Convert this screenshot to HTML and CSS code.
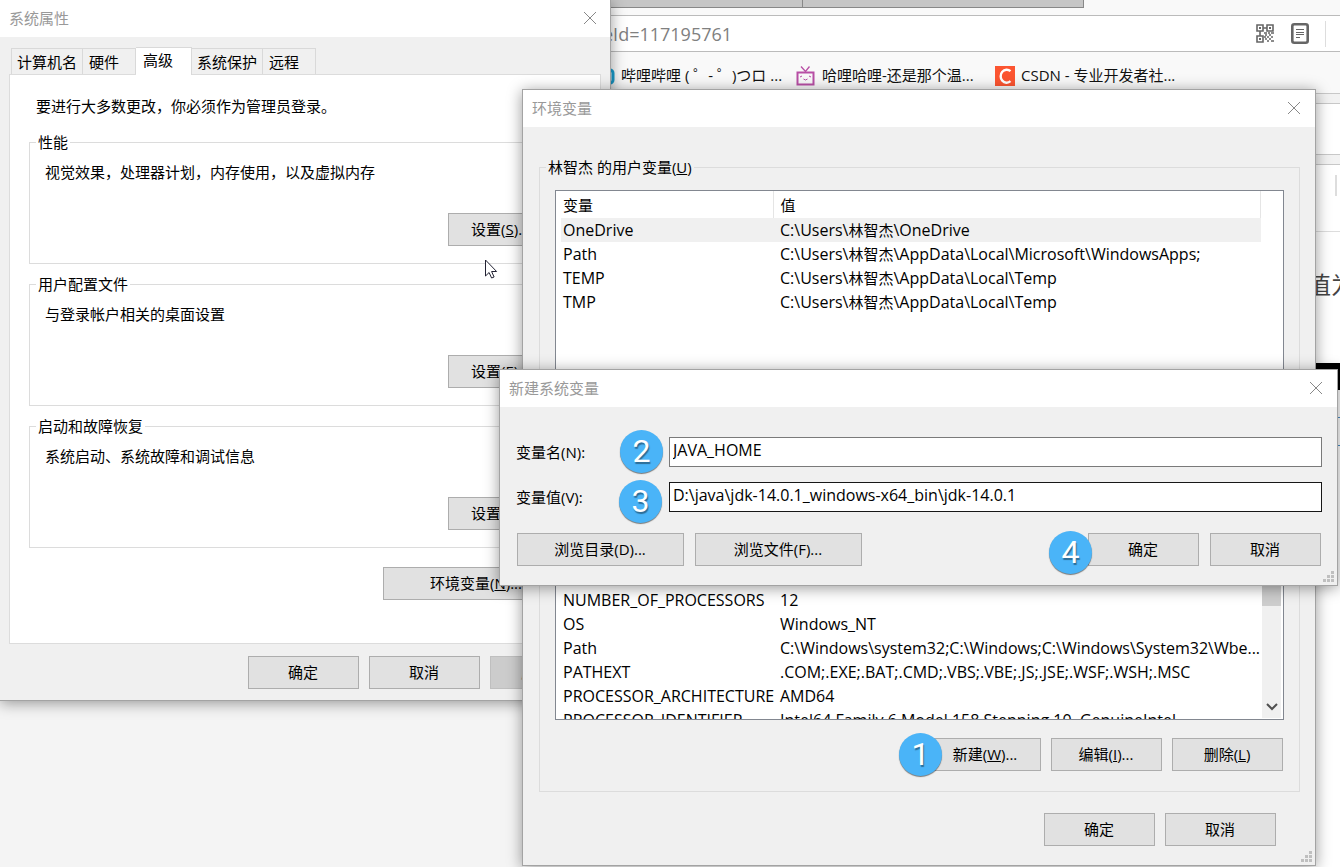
FILE: index.html
```
<!DOCTYPE html>
<html lang="zh-CN">
<head>
<meta charset="utf-8">
<title>环境变量</title>
<link rel="stylesheet" href="styles.css">
</head>
<body>
<div class="desktop">

  <main class="browser">
    <div class="browser-tabs"><span class="browser-tab"></span><span class="browser-tab"></span></div>
    <div class="address">
      <span class="address-text">eId=117195761</span>
      <svg class="qr" width="18" height="19" viewBox="0 0 18 19" fill="none" stroke="#666">
        <path d="M1 1h6v6h-6zM11 1h6v6h-6zM1 12h6v6h-6z" stroke-width="1.600"/>
        <path d="M3 4h2M13 4h2M3 15h2" stroke-width="2"/>
        <path d="M7 4h4M4 7v5M8 9h3M12 9h2M15 9h3M9 11h2M13 11h2M8 13h2M11 13h2M15 13h2M9 15h2M13 15h2M11 17h2M15 17h3" stroke-width="1.600"/>
      </svg>
      <svg class="reader" width="18" height="22" viewBox="0 0 18 22" fill="none" stroke="#666">
        <rect x="1.300" y="1.300" width="15.400" height="18.400" rx="2" stroke-width="2.600"/>
        <path d="M5 6.500h8M5 9.500h8M5 11.500h8M5 14.500h4" stroke-width="1"/>
      </svg>
      <span class="address-rule"></span>
    </div>
    <nav class="bookmarks">
      <a class="bookmark" href="#">
        <svg width="18" height="20" viewBox="0 0 18 20" fill="none" stroke="#1a9fd0" stroke-width="3"><rect x="2" y="4" width="14" height="13" rx="3"/></svg>
        <span>哔哩哔哩 ( ゜- ゜)つロ ...</span>
      </a>
      <a class="bookmark" href="#">
        <svg width="20" height="20" viewBox="0 0 20 20" fill="none" stroke="#b84fa5"><path d="M1.500 6.500h16v12h-16z" stroke-width="2"/><path d="M5 0.500l4.500 5 4-5" stroke-width="1.300"/><path d="M4 11l2-1M13 10l2 1M7.500 13l2 1 2-1" stroke-width="1"/></svg>
        <span>哈哩哈哩-还是那个温...</span>
      </a>
      <a class="bookmark" href="#">
        <svg width="20" height="20" viewBox="0 0 20 20"><path d="M0 0h20v20H0z" fill="#fc5531"/><path d="M15.500 5.200A6 6.500 0 1 0 15.500 15.200" fill="none" stroke="#fff" stroke-width="2.400"/></svg>
        <span>CSDN - 专业开发者社...</span>
      </a>
    </nav>
    <div class="strip"></div>
    <div class="page-bar"></div>
    <div class="strip"></div>
    <div class="page-head"><span class="page-mark"></span></div>
    <div class="page-text">值为</div>
    <div class="code-head"></div>
    <div class="code-row"></div>
    <div class="code-row"></div>
    <div class="page-rest"></div>
  </main>

  <section class="window props">
    <header class="titlebar"><h1>系统属性</h1>
      <button class="close" aria-label="关闭"><svg width="12" height="12" viewBox="0 0 12 12"><path d="M0 0L12 12M12 0L0 12"/></svg></button>
    </header>
    <div class="props-body">
      <div class="tabs" role="tablist">
        <button class="tab" role="tab">计算机名</button>
        <button class="tab wide" role="tab">硬件</button>
        <button class="tab active" role="tab" aria-selected="true">高级</button>
        <button class="tab" role="tab">系统保护</button>
        <button class="tab wide" role="tab">远程</button>
      </div>
      <div class="panel">
        <p class="notice">要进行大多数更改，你必须作为管理员登录。</p>
        <fieldset class="group setting"><legend>性能</legend><p>视觉效果，处理器计划，内存使用，以及虚拟内存</p><button class="btn">设置(<u>S</u>)...</button></fieldset>
        <fieldset class="group setting"><legend>用户配置文件</legend><p>与登录帐户相关的桌面设置</p><button class="btn">设置(<u>E</u>)...</button></fieldset>
        <fieldset class="group setting"><legend>启动和故障恢复</legend><p>系统启动、系统故障和调试信息</p><button class="btn">设置(<u>T</u>)...</button></fieldset>
        <button class="btn env-btn">环境变量(<u>N</u>)...</button>
      </div>
      <div class="actions"><button class="btn">确定</button><button class="btn">取消</button><button class="btn" disabled>应用(<u>A</u>)</button></div>
    </div>
    <svg class="cursor" width="13" height="20" viewBox="0 0 13 20"><path d="M.5 1v16l3.600-3.500 2.500 5.500 2.500-1-2.500-5.500h5z" fill="#fff" stroke="#223"/></svg>
  </section>

  <section class="window env">
    <header class="titlebar"><h1>环境变量</h1>
      <button class="close" aria-label="关闭"><svg width="12" height="12" viewBox="0 0 12 12"><path d="M0 0L12 12M12 0L0 12"/></svg></button>
    </header>
    <div class="env-body">
      <fieldset class="group user-vars"><legend>林智杰 的用户变量(<u>U</u>)</legend>
        <div class="list">
          <table class="vars">
            <thead><tr><th>变量</th><th>值</th></tr></thead>
            <tbody>
              <tr class="selected"><td>OneDrive</td><td>C:\Users\<span class="han">林智杰</span>\OneDrive</td></tr>
              <tr><td>Path</td><td>C:\Users\<span class="han">林智杰</span>\AppData\Local\Microsoft\WindowsApps;</td></tr>
              <tr><td>TEMP</td><td>C:\Users\<span class="han">林智杰</span>\AppData\Local\Temp</td></tr>
              <tr><td>TMP</td><td>C:\Users\<span class="han">林智杰</span>\AppData\Local\Temp</td></tr>
            </tbody>
          </table>
        </div>
      </fieldset>
      <fieldset class="group system-vars">
        <div class="list">
          <table class="vars">
            <tbody>
              <tr><td>NUMBER_OF_PROCESSORS</td><td>12</td></tr>
              <tr><td>OS</td><td>Windows_NT</td></tr>
              <tr><td>Path</td><td>C:\Windows\system32;C:\Windows;C:\Windows\System32\Wbe...</td></tr>
              <tr><td>PATHEXT</td><td>.COM;.EXE;.BAT;.CMD;.VBS;.VBE;.JS;.JSE;.WSF;.WSH;.MSC</td></tr>
              <tr><td>PROCESSOR_ARCHITECTURE</td><td>AMD64</td></tr>
              <tr><td>PROCESSOR_IDENTIFIER</td><td>Intel64 Family 6 Model 158 Stepping 10, GenuineIntel</td></tr>
            </tbody>
          </table>
          <div class="scrollbar"><span class="thumb"></span><svg width="12" height="8" viewBox="0 0 12 8" fill="none" stroke="#505050" stroke-width="2"><path d="M1 1l5 5 5-5"/></svg></div>
        </div>
        <div class="actions"><span class="anchor"><button class="btn">新建(<u>W</u>)...</button><span class="badge">1</span></span><button class="btn">编辑(<u>I</u>)...</button><button class="btn">删除(<u>L</u>)</button></div>
      </fieldset>
      <div class="actions confirm"><button class="btn">确定</button><button class="btn">取消</button></div>
    </div>
    <svg class="grip" width="12" height="12" viewBox="0 0 12 12"><path d="M8 0h3v3H8zM8 4h3v3H8zM8 8h3v3H8zM4 4h3v3H4zM4 8h3v3H4zM0 8h3v3H0z"/></svg>
  </section>

  <section class="window newvar">
    <header class="titlebar"><h1>新建系统变量</h1>
      <button class="close" aria-label="关闭"><svg width="12" height="12" viewBox="0 0 12 12"><path d="M0 0L12 12M12 0L0 12"/></svg></button>
    </header>
    <form class="newvar-body">
      <div class="field"><label for="name">变量名(N):</label><span class="anchor"><input id="name" value="JAVA_HOME"><span class="badge">2</span></span></div>
      <div class="field"><label for="value">变量值(V):</label><span class="anchor"><input id="value" class="focused" value="D:\java\jdk-14.0.1_windows-x64_bin\jdk-14.0.1"><span class="badge low">3</span></span></div>
      <div class="actions">
        <button type="button" class="btn browse">浏览目录(D)...</button><button type="button" class="btn browse">浏览文件(F)...</button>
        <span class="anchor push"><button type="button" class="btn">确定</button><span class="badge ok">4</span></span><button type="button" class="btn">取消</button>
      </div>
    </form>
    <svg class="grip" width="12" height="12" viewBox="0 0 12 12"><path d="M8 0h3v3H8zM8 4h3v3H8zM8 8h3v3H8zM4 4h3v3H4zM4 8h3v3H4zM0 8h3v3H0z"/></svg>
  </section>
</div>
</body>
</html>
```

FILE: styles.css
```
* { box-sizing: border-box; }

body {
  margin: 0;
  font: 15px/20px "Open Sans", "Noto Sans CJK SC", sans-serif;
  color: #000;
  background: #f4f4f4;
}

h1, p { margin: 0; font-size: inherit; font-weight: 400; }
button, input { font: inherit; color: inherit; }

.desktop { position: relative; height: 100vh; overflow: hidden; }

/* Browser behind the dialogs */
.browser {
  display: flex;
  flex-direction: column;
  height: 100%;
  margin-left: 523px;
  background: #f9f9f9;
}
.browser-tabs { display: flex; height: 15px; }
.browser-tab {
  width: 281px;
  height: 8px;
  background: #c6c6c6;
  border: solid #888;
  border-width: 0 1px 1px 0;
}
.browser-tab:first-child { width: 280px; }
.address {
  display: flex;
  align-items: center;
  height: 37px;
  padding-left: 80px;
  background: #fff;
  border: solid #bbb;
  border-width: 1px 0;
}
.address-text { flex: 1; font-size: 18px; color: #808080; }
.qr { margin-right: 17px; }
.reader { margin-right: 16px; }
.address-rule { width: 1px; height: 26px; margin-right: 14px; background: #ddd; }
.bookmarks {
  display: grid;
  grid-template-columns: 199px 199px 1fr;
  align-items: center;
  height: 41px;
  padding: 6px 0 0 74px;
}
.bookmark {
  display: flex;
  gap: 6px;
  align-items: center;
  color: #111;
  text-decoration: none;
  white-space: nowrap;
}
.bookmark span { padding-bottom: 2px; }
.strip { height: 11px; background: #f2f2f2; border: solid #c8c8c8; border-width: 1px 0; }
.page-bar { height: 50px; background: #fff; }
.page-head {
  display: flex;
  justify-content: flex-end;
  height: 67px;
  padding: 10px 3px;
  background: #fff;
  border-bottom: 1px solid #ddd;
}
.page-mark { width: 2px; height: 21px; background: #ddd; }
.page-text {
  height: 131px;
  padding: 36px 0 0 784px;
  overflow: hidden;
  font-size: 24px;
  line-height: 34px;
  color: #444;
  white-space: nowrap;
  background: #fff;
}
.code-head { height: 27px; background: #000; }
.code-row { height: 28px; background: #fff; border-bottom: 1px solid #4a90c8; }
.page-rest { flex: 1; background: #fff; }

/* Dialog windows */
.window {
  position: absolute;
  display: flex;
  flex-direction: column;
  background: #f0f0f0;
  border: 1px solid #a3a3a3;
  box-shadow: 0 2px 14px rgba(0, 0, 0, .4);
}
.props { top: 0; left: 0; width: 611px; height: 701px; border-width: 0 1px 1px 0; }
.env { top: 89px; left: 522px; width: 794px; height: 777px; }
.newvar { top: 369px; left: 499px; width: 839px; height: 217px; }

.titlebar {
  display: flex;
  align-items: center;
  justify-content: space-between;
  height: 37px;
  padding: 0 9px 2px;
  color: #999;
  background: #fff;
}
.props .titlebar { padding-right: 8px; }
.close { display: flex; padding: 6px; background: none; border: 0; }
.close svg { fill: none; stroke: #888; }

.btn {
  width: 111px;
  height: 33px;
  padding: 0 1px 2px 0;
  background: #e1e1e1;
  border: 1px solid #adadad;
  white-space: nowrap;
}
.btn:disabled { color: #838383; background: #ccc; border-color: #bfbfbf; }
.actions { display: flex; gap: 10px; justify-content: flex-end; }

.group { min-width: 0; margin: 0; padding: 0; border: 1px solid #dcdcdc; }
.group legend { padding: 0 2px; margin-left: -9px; }

/* System properties */
.props-body { display: flex; flex-direction: column; flex: 1; padding: 10px 9px 11px; }
.tabs { display: flex; align-items: flex-end; height: 27px; padding-left: 2px; }
.tab {
  height: 26px;
  padding: 0 5px;
  background: #f0f0f0;
  border: 1px solid #d9d9d9;
  border-bottom: 0;
  border-left-width: 0;
}
.tab:first-child { border-left-width: 1px; }
.tab.wide { padding: 0 16px 0 6px; }
.tab.active {
  z-index: 1;
  height: 28px;
  margin-bottom: -1px;
  padding: 0 18px 4px 7px;
  background: #fff;
}
.panel {
  display: flex;
  flex-direction: column;
  height: 570px;
  padding: 21px 19px 0;
  background: #fff;
  border: 1px solid #dcdcdc;
}
.notice { padding-left: 7px; margin-bottom: 16px; }
.setting {
  display: flex;
  flex-direction: column;
  height: 132px;
  margin-bottom: 10px;
  padding: 10px 21px 0 15px;
}
.setting .btn { align-self: flex-end; margin-top: 31px; padding-right: 6px; }
.env-btn { align-self: flex-end; width: 187px; margin: 9px 11px 0 0; }
.props-body > .actions { margin-top: 12px; }
.cursor { position: absolute; top: 259px; left: 485px; }

/* Environment variables */
.env-body { display: flex; flex-direction: column; flex: 1; padding: 30px 15px 19px 16px; }
.list { display: flex; background: #fff; border: 1px solid #828790; overflow: hidden; }
.user-vars { height: 289px; padding: 13px 15px 0; }
.user-vars .list { height: 192px; padding: 0 22px 0 5px; }
.system-vars { height: 345px; margin-top: auto; padding: 79px 15px 0; }
.system-vars .list { height: 193px; padding: 60px 2px 1px 5px; }
.system-vars .actions { margin: 18px 1px 0 0; }
.confirm { margin: 21px 24px 0 0; }
.vars { flex: 1; align-self: flex-start; border-collapse: collapse; table-layout: fixed; width: 100%; }
.vars th, .vars td { height: 24px; padding: 0 2px; text-align: left; font-weight: 400; white-space: nowrap; }
.vars td { font-size: 16px; }
.han { font-size: 15px; }
.vars th { height: 27px; border-right: 1px solid #e5e5e5; }
.vars th:first-child, .vars td:first-child { width: 212px; }
.vars th + th, .vars td + td { padding: 0 0 0 7px; }
.selected { background: #f0f0f0; }
.scrollbar {
  display: flex;
  flex-direction: column;
  justify-content: space-between;
  align-items: center;
  width: 19px;
  margin-top: -60px;
  padding-bottom: 7px;
  background: #f0f0f0;
}
.thumb { width: 100%; height: 78px; background: #cdcdcd; }

/* New system variable */
.newvar-body { display: flex; flex-direction: column; padding: 30px 15px 19px 16px; }
.field { display: flex; align-items: center; margin-bottom: 15px; }
.field label { width: 153px; }
.anchor { position: relative; display: flex; }
.field .anchor { flex: 1; }
.field input {
  width: 100%;
  height: 30px;
  padding: 0 3px 4px;
  font-size: 16px;
  background: #fff;
  border: 1px solid #7a7a7a;
  border-radius: 0;
  outline: 0;
}
.field input.focused { border-color: #171717; }
.newvar .actions { gap: 11px; margin-top: 6px; padding: 0 1px; }
.browse { width: 167px; }
.push { margin-left: auto; }

.badge {
  position: absolute;
  top: -7px;
  left: -49px;
  width: 43px;
  height: 43px;
  font: 32px/42px Roboto, sans-serif;
  color: #fff;
  text-align: center;
  text-shadow: 1px 2px 1px rgba(0, 0, 0, .4);
  background: #4ab4f8;
  border-radius: 50%;
  box-shadow: 0 1px 1px rgba(0, 0, 0, .5);
}
.badge.low { top: -2px; left: -50px; }
.badge.ok { top: -2px; left: -39px; }
.env .badge { top: -5px; left: -31px; }

.grip { position: absolute; right: 2px; bottom: 2px; fill: #bfbfbf; }
```
